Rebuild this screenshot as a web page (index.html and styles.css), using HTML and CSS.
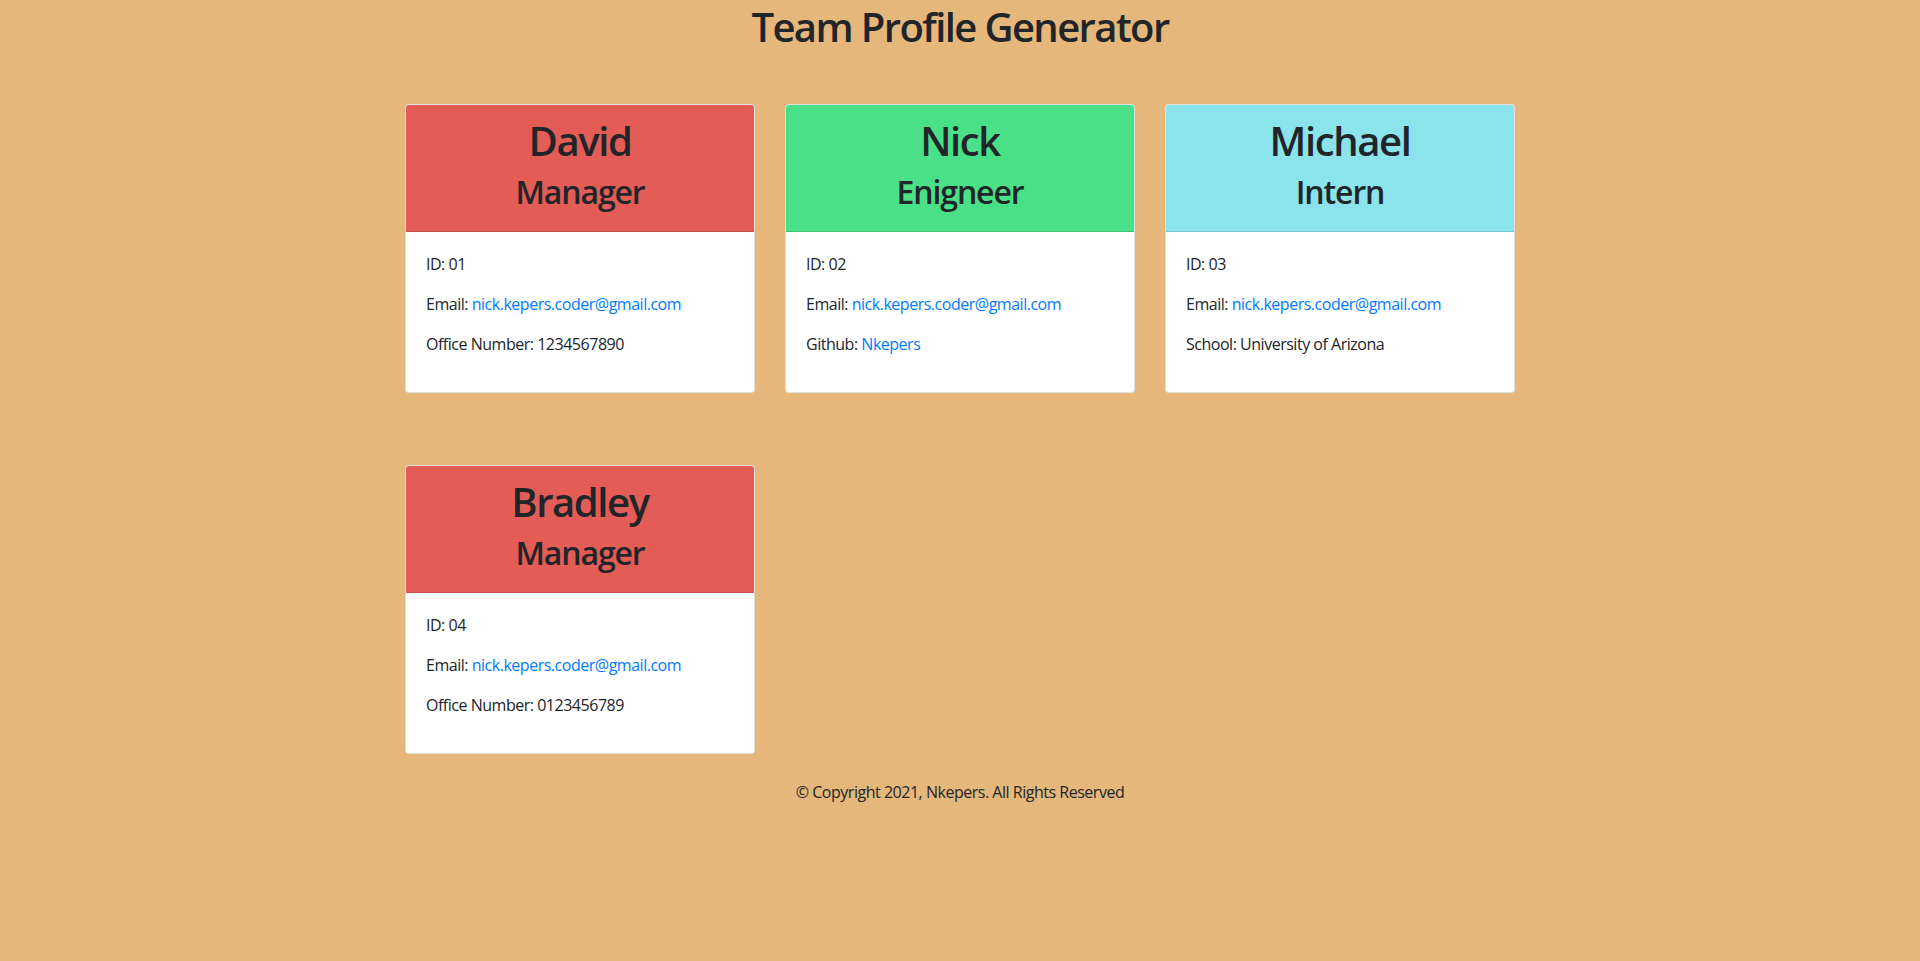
FILE: index.html
```html
<!DOCTYPE html>
<html lang="en">
<head>
<meta charset="utf-8">
<title>Team Profile Generator</title>
<link rel="stylesheet" href="styles.css">
</head>
<body>
<header class="page-header">
  <h1 class="page-title">Team Profile Generator</h1>
</header>
<main class="container">
  <div class="grid">
    <div class="card">
      <div class="card-header manager">
        <h2 class="name">David</h2>
        <h3 class="role">Manager</h3>
      </div>
      <div class="card-body">
        <p>ID: 01</p>
        <p>Email: <a href="#">nick.kepers.coder@gmail.com</a></p>
        <p>Office Number: 1234567890</p>
      </div>
    </div>
    <div class="card">
      <div class="card-header engineer">
        <h2 class="name">Nick</h2>
        <h3 class="role">Enigneer</h3>
      </div>
      <div class="card-body">
        <p>ID: 02</p>
        <p>Email: <a href="#">nick.kepers.coder@gmail.com</a></p>
        <p>Github: <a href="#">Nkepers</a></p>
      </div>
    </div>
    <div class="card">
      <div class="card-header intern">
        <h2 class="name">Michael</h2>
        <h3 class="role">Intern</h3>
      </div>
      <div class="card-body">
        <p>ID: 03</p>
        <p>Email: <a href="#">nick.kepers.coder@gmail.com</a></p>
        <p>School: University of Arizona</p>
      </div>
    </div>
    <div class="card">
      <div class="card-header manager">
        <h2 class="name">Bradley</h2>
        <h3 class="role">Manager</h3>
      </div>
      <div class="card-body">
        <p>ID: 04</p>
        <p>Email: <a href="#">nick.kepers.coder@gmail.com</a></p>
        <p>Office Number: 0123456789</p>
      </div>
    </div>
  </div>
</main>
<footer class="footer">
  <p>&copy; Copyright 2021, Nkepers. All Rights Reserved</p>
</footer>
</body>
</html>
```
FILE: styles.css
```css
* { box-sizing: border-box; }

html, body {
  margin: 0;
  padding: 0;
}

body {
  background: #e6b77a;
  color: #212529;
  font-family: "Open Sans", "Noto Sans", "Liberation Sans", sans-serif;
  font-size: 16px;
  line-height: 24px;
  letter-spacing: -0.03em;
  min-height: 961px;
}

.page-header {
  text-align: center;
  padding-top: 3px;
}

.page-title {
  margin: 0;
  font-size: 40px;
  line-height: 48px;
  font-weight: 600;
  letter-spacing: -0.04em;
}

.container {
  width: 1110px;
  margin: 53px auto 0;
}

.grid {
  display: grid;
  grid-template-columns: repeat(3, 350px);
  column-gap: 30px;
  row-gap: 72px;
}

.card {
  background: #fff;
  border: 1px solid rgba(0, 0, 0, 0.125);
  border-radius: 4px;
  overflow: hidden;
}

.card-header {
  padding: 12px 20px;
  text-align: center;
  border-bottom: 1px solid rgba(0, 0, 0, 0.125);
}

.manager { background: #e35c56; }
.engineer { background: #4ae087; }
.intern { background: #8be3eb; }

.name {
  margin: 0 0 8px;
  font-size: 40px;
  line-height: 48px;
  font-weight: 600;
  letter-spacing: -0.035em;
}

.role {
  margin: 0 0 8px;
  font-size: 32px;
  line-height: 38px;
  font-weight: 600;
  letter-spacing: -0.035em;
}

.card-body {
  padding: 20px;
}

.card-body p {
  margin: 0 0 16px;
}

a {
  color: #007bff;
  text-decoration: none;
}

.footer {
  text-align: center;
  margin-top: 26px;
}

.footer p {
  margin: 0;
}
```
